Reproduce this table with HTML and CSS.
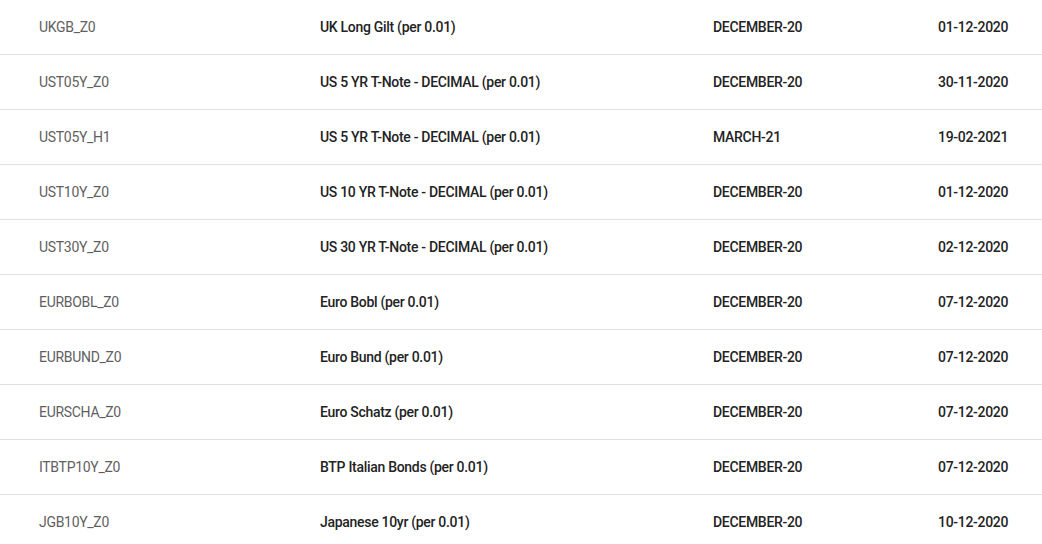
FILE: index.html
```html
<!DOCTYPE html>
<html>
<head>
<meta charset="utf-8">
<link rel="stylesheet" href="styles.css">
</head>
<body>
<div class="table">
  <div class="row"><span class="code">UKGB_Z0</span><span class="name">UK Long Gilt (per 0.01)</span><span class="month">DECEMBER-20</span><span class="date">01-12-2020</span></div>
  <div class="row"><span class="code">UST05Y_Z0</span><span class="name">US 5 YR T-Note - DECIMAL (per 0.01)</span><span class="month">DECEMBER-20</span><span class="date">30-11-2020</span></div>
  <div class="row"><span class="code">UST05Y_H1</span><span class="name">US 5 YR T-Note - DECIMAL (per 0.01)</span><span class="month">MARCH-21</span><span class="date">19-02-2021</span></div>
  <div class="row"><span class="code">UST10Y_Z0</span><span class="name">US 10 YR T-Note - DECIMAL (per 0.01)</span><span class="month">DECEMBER-20</span><span class="date">01-12-2020</span></div>
  <div class="row"><span class="code">UST30Y_Z0</span><span class="name">US 30 YR T-Note - DECIMAL (per 0.01)</span><span class="month">DECEMBER-20</span><span class="date">02-12-2020</span></div>
  <div class="row"><span class="code">EURBOBL_Z0</span><span class="name">Euro Bobl (per 0.01)</span><span class="month">DECEMBER-20</span><span class="date">07-12-2020</span></div>
  <div class="row"><span class="code">EURBUND_Z0</span><span class="name">Euro Bund (per 0.01)</span><span class="month">DECEMBER-20</span><span class="date">07-12-2020</span></div>
  <div class="row"><span class="code">EURSCHA_Z0</span><span class="name">Euro Schatz (per 0.01)</span><span class="month">DECEMBER-20</span><span class="date">07-12-2020</span></div>
  <div class="row"><span class="code">ITBTP10Y_Z0</span><span class="name">BTP Italian Bonds (per 0.01)</span><span class="month">DECEMBER-20</span><span class="date">07-12-2020</span></div>
  <div class="row"><span class="code">JGB10Y_Z0</span><span class="name">Japanese 10yr (per 0.01)</span><span class="month">DECEMBER-20</span><span class="date">10-12-2020</span></div>
</div>
</body>
</html>
```
FILE: styles.css
```css
html, body {
  margin: 0;
  padding: 0;
  background: #ffffff;
  overflow: hidden;
}
body {
  font-family: Roboto, "Liberation Sans", sans-serif;
  font-size: 14px;
  letter-spacing: -0.3px;
  color: #212121;
}
.table {
  display: flex;
  flex-direction: column;
}
.row {
  display: grid;
  grid-template-columns: 281px 393px 225px 1fr;
  align-items: center;
  height: 54px;
  padding-left: 39px;
  border-bottom: 1px solid #e0e0e0;
  line-height: 16px;
}
.code {
  color: #5f5f5f;
  font-weight: 400;
}
.name, .month, .date {
  color: #232323;
  font-weight: 500;
}
```
